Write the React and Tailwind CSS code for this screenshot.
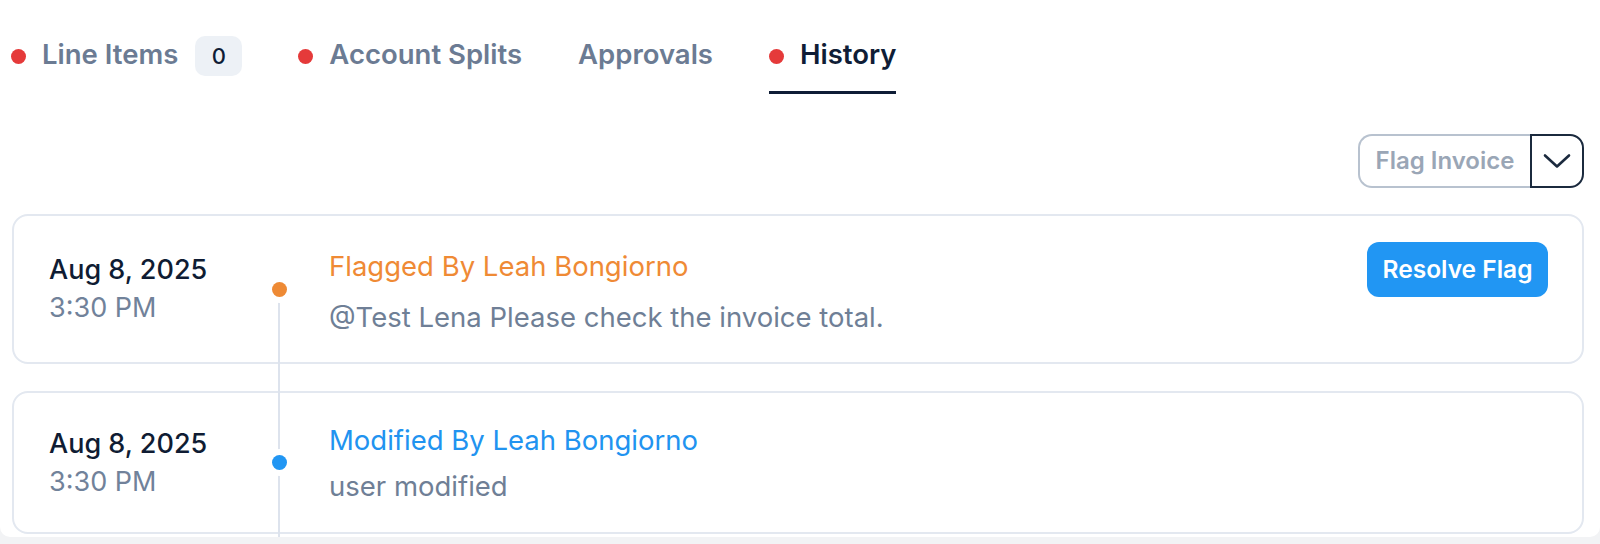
import React from "react";

const font = { fontFamily: "Inter, 'Noto Sans', sans-serif" };

function Tab({ label, dot, badge, active }) {
  return (
    <div className={`flex flex-col pb-[15px] border-b-[3px] ${active ? "border-[#0f1d36]" : "border-transparent"}`}>
      <div className="flex h-[40px] items-center gap-4">
        {dot && <span className="h-[15px] w-[15px] rounded-full bg-[#e53a3a]" />}
        <span
          className={`text-[27.5px] font-semibold leading-none -translate-y-[1px] ${active ? "text-[#0f1d36]" : "text-[#6b7b93]"}`}
        >
          {label}
        </span>
        {badge !== undefined && (
          <span className="ml-[1px] flex h-[40px] w-[47px] items-center justify-center rounded-[10px] bg-[#edf1f6] text-[22px] font-medium text-[#0f1d36]">
            {badge}
          </span>
        )}
      </div>
    </div>
  );
}

function Card({ h, title, titleColor, dotColor, desc, button, gap, shift }) {
  return (
    <div
      className={`flex items-center rounded-[16px] border-2 border-[#e3e8f0] pl-[35px] pr-[34px] ${h}`}
    >
      <div className="flex w-[223px] flex-col">
        <span className="text-[27px] font-medium leading-[38px] text-[#0f1c33]">Aug 8, 2025</span>
        <span className="text-[27px] leading-[38px] text-[#71829a]">3:30 PM</span>
      </div>
      <span
        className={`relative z-10 h-[15px] w-[15px] shrink-0 rounded-full ring-[6px] ring-white ${dotColor}`}
      />
      <div className={`ml-[42px] flex flex-1 flex-col ${gap} ${shift}`}>
        <span className={`text-[27.5px] leading-[40px] ${titleColor}`}>{title}</span>
        <span className="text-[27.5px] leading-[40px] text-[#6f7f96]">{desc}</span>
      </div>
      {button && (
        <button className="mt-[26px] self-start flex h-[55px] w-[181px] items-center justify-center rounded-[12px] bg-[#2196f3] text-[24.5px] font-semibold text-white">
          Resolve Flag
        </button>
      )}
    </div>
  );
}

export default function App() {
  return (
    <div className="min-h-[544px] w-full bg-[#f2f3f5]" style={font}>
      <div className="h-[537px] overflow-hidden rounded-b-[10px] bg-white">
        <div className="flex items-start gap-[56px] pl-[11px] pt-[36px]">
          <Tab label="Line Items" dot badge="0" />
          <Tab label="Account Splits" dot />
          <Tab label="Approvals" />
          <Tab label="History" dot active />
        </div>

        <div className="mt-[40px] flex justify-end pr-[16px]">
          <div className="flex h-[54px]">
            <div className="flex w-[172px] items-center justify-center rounded-l-[14px] border-2 border-r-0 border-[#b8c2cf] text-[24px] font-semibold text-[#9aa6b6]">
              Flag Invoice
            </div>
            <div className="flex w-[54px] items-center justify-center rounded-r-[14px] border-2 border-[#1b2a3e]">
              <svg width="28" height="16" viewBox="0 0 28 16" fill="none">
                <path d="M2 2.5 L14 13.5 L26 2.5" stroke="#1b2a3e" strokeWidth="2.6" strokeLinecap="round" strokeLinejoin="round" />
              </svg>
            </div>
          </div>
        </div>

        <div className="relative ml-[12px] mr-[16px] mt-[26px] flex flex-col gap-[27px]">
          <Card
            h="h-[150px]"
            title="Flagged By Leah Bongiorno"
            titleColor="text-[#ef8a35]"
            dotColor="bg-[#ee8a35]"
            desc="@Test Lena Please check the invoice total."
            gap="gap-[11px]"
            shift="pt-[4px]"
            button
          />
          <Card
            h="h-[143px]"
            title="Modified By Leah Bongiorno"
            titleColor="text-[#2193f0]"
            dotColor="bg-[#2196f3]"
            desc="user modified"
            gap="gap-[6px]"
            shift="pt-0"
          />
          <div className="absolute left-[266px] top-[76px] bottom-[-10px] w-[2px] bg-[#dde3ed]" />
        </div>
      </div>
    </div>
  );
}
